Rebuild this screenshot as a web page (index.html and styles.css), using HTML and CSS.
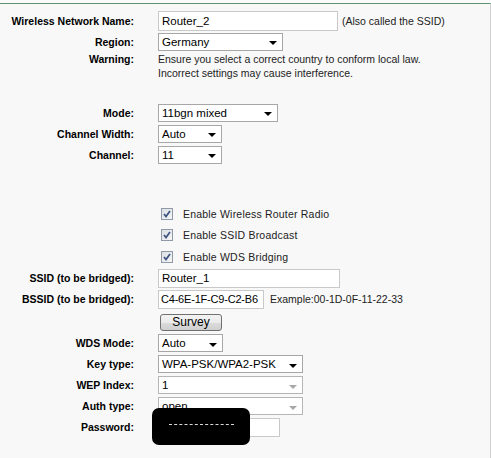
FILE: index.html
```html
<html>
    <head>
        <title>Wireless Settings</title>
        <link rel="stylesheet" href="styles.css">
    </head>
    <body>
        <div class="frame">
            <div class="row">
                <span class="lbl">Wireless Network Name:</span>
                <div class="ctl">
                    <input type="text" class="txt w-name" value="Router_2">
                    <span class="note">(Also called the SSID)</span>
                </div>
            </div>
            <div class="row">
                <span class="lbl">Region:</span>
                <div class="ctl">
                    <div class="sel w-region"><span>Germany</span><i class="arr"></i></div>
                </div>
            </div>
            <div class="row row-warn">
                <span class="lbl">Warning:</span>
                <div class="ctl warn">
                    Ensure you select a correct country to conform local law.<br>
                    Incorrect settings may cause interference.
                </div>
            </div>

            <div class="row gap-mode">
                <span class="lbl">Mode:</span>
                <div class="ctl">
                    <div class="sel w-mode"><span>11bgn mixed</span><i class="arr"></i></div>
                </div>
            </div>
            <div class="row">
                <span class="lbl">Channel Width:</span>
                <div class="ctl">
                    <div class="sel w-small"><span>Auto</span><i class="arr"></i></div>
                </div>
            </div>
            <div class="row">
                <span class="lbl">Channel:</span>
                <div class="ctl">
                    <div class="sel w-small"><span>11</span><i class="arr"></i></div>
                </div>
            </div>

            <div class="row row-chk gap-chk">
                <span class="lbl"></span>
                <div class="ctl">
                    <i class="box">
                        <svg width="12" height="12" viewBox="0 0 12 12"><path d="M3 6l2 2.5L9 3" fill="none" stroke="#3f5684" stroke-width="1.8"/></svg>
                    </i>
                    <span class="chk-text">Enable Wireless Router Radio</span>
                </div>
            </div>
            <div class="row row-chk">
                <span class="lbl"></span>
                <div class="ctl">
                    <i class="box">
                        <svg width="12" height="12" viewBox="0 0 12 12"><path d="M3 6l2 2.5L9 3" fill="none" stroke="#3f5684" stroke-width="1.8"/></svg>
                    </i>
                    <span class="chk-text">Enable SSID Broadcast</span>
                </div>
            </div>
            <div class="row row-chk">
                <span class="lbl"></span>
                <div class="ctl">
                    <i class="box">
                        <svg width="12" height="12" viewBox="0 0 12 12"><path d="M3 6l2 2.5L9 3" fill="none" stroke="#3f5684" stroke-width="1.8"/></svg>
                    </i>
                    <span class="chk-text">Enable WDS Bridging</span>
                </div>
            </div>

            <div class="row">
                <span class="lbl">SSID (to be bridged):</span>
                <div class="ctl">
                    <input type="text" class="txt w-ssid" value="Router_1">
                </div>
            </div>
            <div class="row">
                <span class="lbl">BSSID (to be bridged):</span>
                <div class="ctl">
                    <input type="text" class="txt w-bssid" value="C4-6E-1F-C9-C2-B6">
                    <span class="note">Example:00-1D-0F-11-22-33</span>
                </div>
            </div>
            <div class="row row-btn">
                <span class="lbl"></span>
                <div class="ctl">
                    <button class="btn">Survey</button>
                </div>
            </div>
            <div class="row">
                <span class="lbl">WDS Mode:</span>
                <div class="ctl">
                    <div class="sel w-wds"><span>Auto</span><i class="arr"></i></div>
                </div>
            </div>
            <div class="row">
                <span class="lbl">Key type:</span>
                <div class="ctl">
                    <div class="sel w-key"><span>WPA-PSK/WPA2-PSK</span><i class="arr"></i></div>
                </div>
            </div>
            <div class="row">
                <span class="lbl">WEP Index:</span>
                <div class="ctl">
                    <div class="sel w-key off"><span>1</span><i class="arr"></i></div>
                </div>
            </div>
            <div class="row">
                <span class="lbl">Auth type:</span>
                <div class="ctl">
                    <div class="sel w-key off"><span>open</span><i class="arr"></i></div>
                </div>
            </div>
            <div class="row">
                <span class="lbl">Password:</span>
                <div class="ctl">
                    <input type="password" class="txt w-pass" value="">
                </div>
            </div>

            <div class="blackout"><i class="dash"></i></div>
        </div>
    </body>
</html>
```

FILE: styles.css
```css
* {
box-sizing: border-box;
}
body {
margin: 0;
background-color: #fbfbfb;
font-family: "Liberation Sans", Arial, sans-serif;
color: #000;
}
.frame {
position: relative;
width: 491px;
height: 455px;
margin-top: 3px;
padding-top: 6px;
background-color: #f8f8f8;
border-top: 1px solid #5d9470;
border-right: 1px solid #cfcfcf;
}
.row {
display: flex;
align-items: center;
height: 21px;
}
.lbl {
flex: 0 0 134px;
text-align: right;
font-size: 10.5px;
font-weight: bold;
margin-right: 24px;
}
.ctl {
display: flex;
align-items: center;
font-size: 10.5px;
}
.note {
margin-left: 4px;
font-size: 10.5px;
color: #222;
}
.row-warn {
height: 28px;
align-items: flex-start;
}
.row-warn .lbl {
line-height: 14px;
}
.warn {
display: block;
line-height: 14px;
color: #222;
}
.gap-mode {
margin-top: 22px;
}
.gap-chk {
margin-top: 38px;
}
.row-chk {
height: 21.5px;
}
.row-chk .ctl {
padding-left: 3px;
}
.chk-text {
margin-left: 10px;
color: #222;
letter-spacing: 0.2px;
}
.box {
display: flex;
width: 12px;
height: 12px;
border: 1px solid #8e9aa8;
background: linear-gradient(135deg, #dcdfe3, #f6f6f6);
}
.box svg {
margin: -1px;
}
.txt {
height: 19px;
border: 1px solid #c9c9c9;
background-color: #fff;
padding: 0 3px;
font-family: "Liberation Sans", Arial, sans-serif;
font-size: 11.5px;
color: #000;
outline: none;
}
.w-name {
width: 180px;
height: 20px;
}
.w-ssid {
width: 182px;
}
.w-bssid {
width: 106px;
margin-right: 2px;
padding: 0 1px 0 2px;
font-size: 11px;
letter-spacing: -0.2px;
}
.w-pass {
width: 122px;
}
.sel {
display: flex;
align-items: center;
justify-content: space-between;
height: 18px;
border: 1px solid #a7a7a7;
background-color: #fff;
padding: 0 5px 0 3px;
font-size: 11.5px;
}
.arr {
width: 0;
height: 0;
margin-top: 3px;
border-left: 4px solid transparent;
border-right: 4px solid transparent;
border-top: 4px solid #000;
}
.sel.off {
border-color: #b5b5b5;
}
.sel.off .arr {
border-top-color: #a8a8a8;
}
.w-region {
width: 125px;
}
.w-mode {
width: 120px;
}
.w-small {
width: 64px;
}
.w-wds {
width: 65px;
}
.w-key {
width: 145px;
}
.row-btn {
height: 23px;
padding-top: 2px;
}
.btn {
margin-left: 2px;
width: 62px;
height: 17px;
padding: 0;
border: 1px solid #707070;
border-radius: 3px;
background: linear-gradient(#f3f3f3, #ebebeb 50%, #dcdcdc 50%, #cfcfcf);
font-family: "Liberation Sans", Arial, sans-serif;
font-size: 12px;
color: #000;
}
.blackout {
position: absolute;
left: 152px;
top: 404px;
width: 98px;
height: 37px;
border-radius: 7px;
background-color: #000;
}
.dash {
display: block;
margin: 16px 0 0 17px;
width: 65px;
border-top: 1px dashed #d8d8d8;
}
```
